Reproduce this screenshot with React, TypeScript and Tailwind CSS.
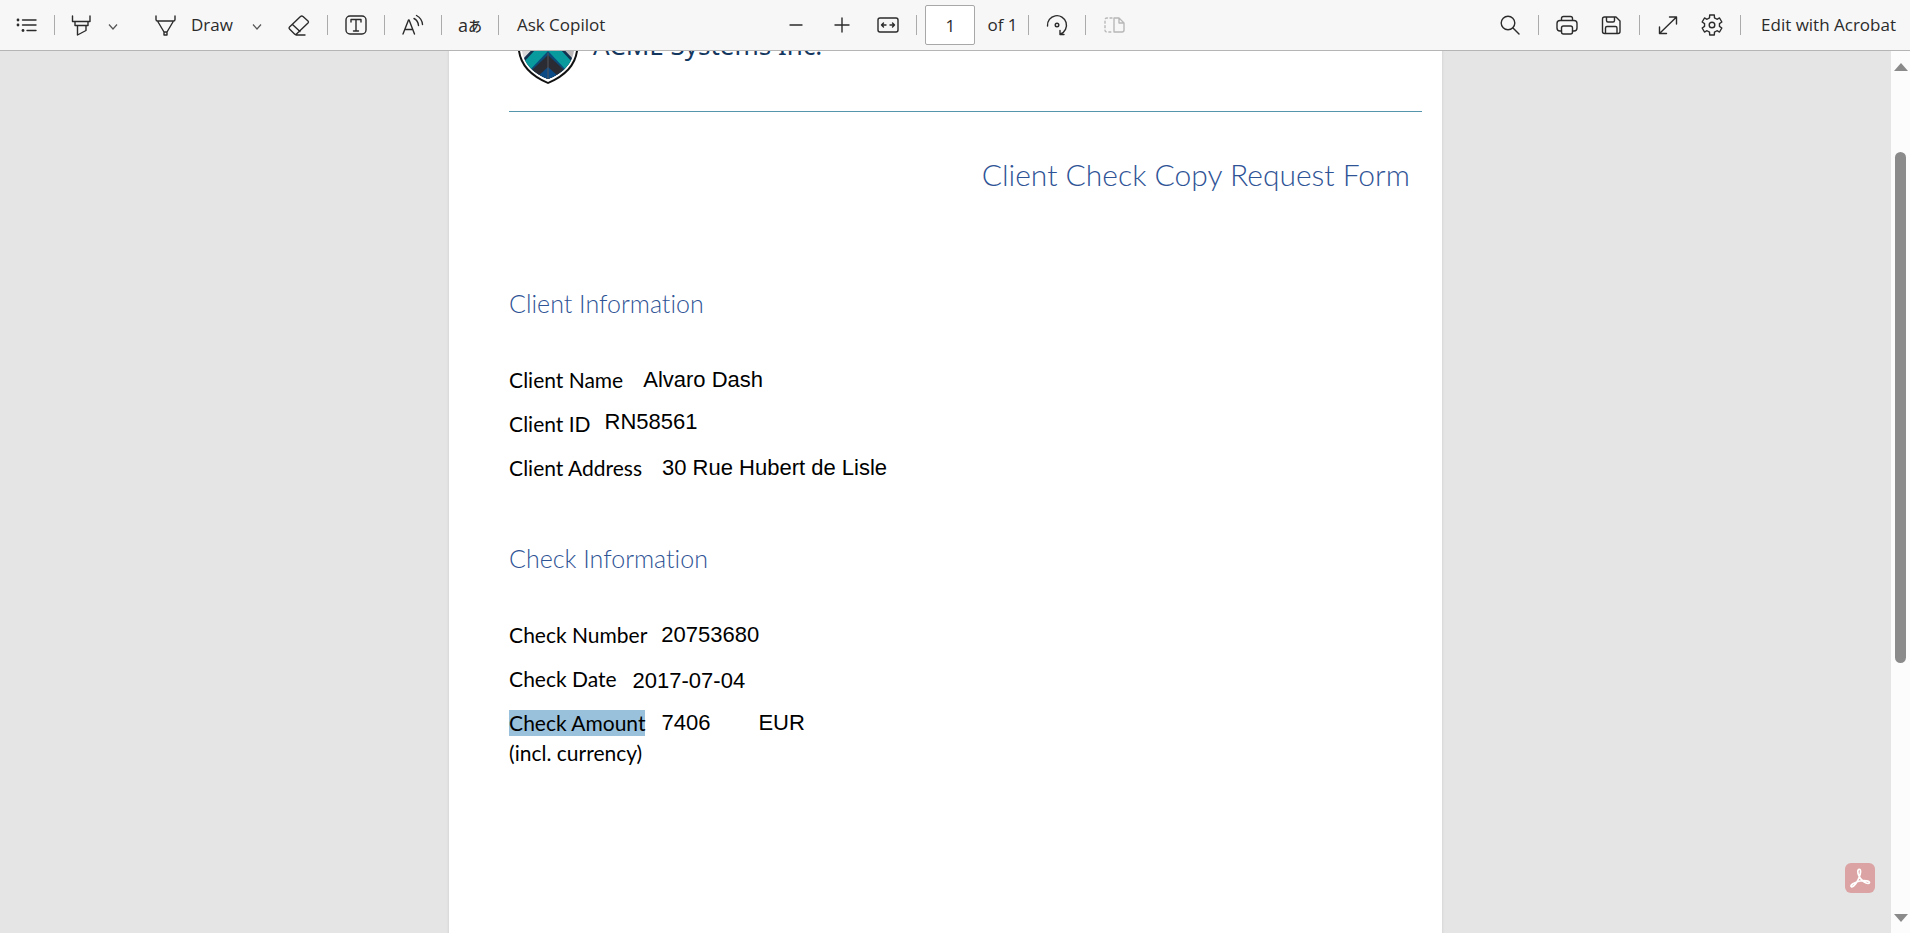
import React from "react";

const toolbarFont = "font-['Open_Sans','Noto_Sans',sans-serif]";
const bodyFont = "font-['Lato',sans-serif] [font-variant-ligatures:none]";
const valueFont = "font-['Liberation_Sans',Arial,sans-serif]";

// Outline of a six-toothed gear centred in a 24x24 box.
const gearPath =
  [0, 60, 120, 180, 240, 300]
    .flatMap((centre) =>
      [
        [-19, 7.6],
        [-13, 10.3],
        [13, 10.3],
        [19, 7.6],
      ].map(([offset, radius]) => {
        const angle = ((centre - 90 + offset) * Math.PI) / 180;
        return `${(12 + radius * Math.cos(angle)).toFixed(2)} ${(12 + radius * Math.sin(angle)).toFixed(2)}`;
      }),
    )
    .reduce((path, point, i) => path + (i ? "L" : "M") + point, "") + "Z";

function Glyph({ children, width = 1.4 }: { children: React.ReactNode; width?: number }) {
  return (
    <svg
      aria-hidden="true"
      viewBox="0 0 24 24"
      className="size-6 shrink-0"
      fill="none"
      stroke="currentColor"
      strokeWidth={width}
      strokeLinecap="round"
      strokeLinejoin="round"
    >
      {children}
    </svg>
  );
}

function Tool({ label, children, disabled }: { label: string; children: React.ReactNode; disabled?: boolean }) {
  return (
    <button
      type="button"
      aria-label={label}
      disabled={disabled}
      className="flex h-9 w-9 shrink-0 items-center justify-center disabled:text-[#b8b8b8]"
    >
      {children}
    </button>
  );
}

function Chevron({ label }: { label: string }) {
  return (
    <button type="button" aria-label={label} className="flex h-9 w-4 shrink-0 items-center justify-center">
      <svg aria-hidden="true" viewBox="0 0 10 10" className="mt-1 size-2.5" fill="none" stroke="#555" strokeWidth="1.2">
        <path d="M1 2.5 5 7l4-4.5" />
      </svg>
    </button>
  );
}

function Divider() {
  return <span className="mx-2.5 h-5 w-px shrink-0 bg-[#ababab]" />;
}

function Toolbar() {
  return (
    <header
      className={`grid h-[51px] shrink-0 grid-cols-[1fr_auto_1fr] items-center border-b border-[#b5b5b5] bg-[#f7f7f7] text-[17px] whitespace-nowrap text-[#2b2b2b] ${toolbarFont}`}
    >
      <div className="flex items-center pl-2">
        <Tool label="Table of contents">
          <Glyph>
            <path d="M8.500 7H22M8.500 12H22M13 17.500h9" />
            <g fill="currentColor" stroke="none">
              <circle cx="4" cy="7" r="1.400" />
              <circle cx="4" cy="12" r="1.400" />
              <circle cx="9" cy="17.500" r="1.400" />
            </g>
          </Glyph>
        </Tool>
        <Divider />
        <div className="flex items-center gap-2 pr-4">
          <button type="button" aria-label="Highlight" className="flex h-9 w-8 items-center justify-center">
            <Glyph>
              <path d="M3.500 3v5.500h17.500V3M6 8.500v4h13v-4M8.500 12.500V22l8.500-4.500v-5" />
            </Glyph>
          </button>
          <Chevron label="Highlight options" />
        </div>
        <div className="flex items-center gap-4 pr-4 pl-2.5">
          <button type="button" className="flex h-9 items-center gap-3.5 pl-1.5">
            <Glyph>
              <path d="M3 3v3.500Q3 8 4.500 8h16Q22 8 22 6.500V3M4.500 8 11 19h3l6.500-11M11 19v3h3v-3" />
            </Glyph>
            Draw
          </button>
          <Chevron label="Draw options" />
        </div>
        <Tool label="Erase">
          <Glyph>
            <path d="m13.500 3.500-11 10.500q-1 1 0 2l5 5q1 1 2 0L21 10q1-1 0-2l-5-4.500q-1.300-1-2.500 0ZM5.500 11.500l7.500 7M9 22h9" />
          </Glyph>
        </Tool>
        <Divider />
        <Tool label="Add text">
          <Glyph>
            <rect x="2" y="3" width="20" height="18" rx="4" />
            <path d="M7 9V6.500h10V9M12 6.500V18M9.500 18h5" />
          </Glyph>
        </Tool>
        <Divider />
        <Tool label="Read aloud">
          <Glyph>
            <path d="M2 21 7.500 7h.600L13.500 21M4 16.500h7.800M13 5.500q4 2 4.500 7M15.500 2.500q5.500 3 6 9" />
          </Glyph>
        </Tool>
        <Divider />
        <Tool label="Translate">
          <span className="text-lg leading-6">a</span>
          <span className="font-['Noto_Sans_CJK_JP',sans-serif] text-sm leading-6 font-medium" lang="ja">
            あ
          </span>
        </Tool>
        <Divider />
        <button type="button" className="h-9 px-2">
          Ask Copilot
        </button>
      </div>

      <div className="flex items-center">
        <div className="flex items-center gap-2.5">
          <Tool label="Zoom out">
            <Glyph>
              <path d="M6 12h12" />
            </Glyph>
          </Tool>
          <Tool label="Zoom in">
            <Glyph>
              <path d="M5 12h14M12 5v14" />
            </Glyph>
          </Tool>
          <Tool label="Fit to width">
            <Glyph>
              <rect x="2" y="5" width="20" height="14" rx="2" />
              <path d="M10 12H5.500m2-2-2 2 2 2M14 12h4.500m-2-2 2 2-2 2" />
            </Glyph>
          </Tool>
        </div>
        <span className="mr-2 ml-2.5 h-5 w-px bg-[#ababab]" />
        <label className="flex items-center gap-3">
          <input
            aria-label="Page number"
            defaultValue="1"
            className="h-10 w-[50px] rounded-xs border border-[#a8a8a8] bg-white text-center outline-none"
          />
          of 1
        </label>
        <span className="mr-2.5 ml-2.5 h-5 w-px bg-[#ababab]" />
        <Tool label="Rotate">
          <Glyph>
            <path d="M2.500 13A9.500 9.500 0 1 1 15.500 21M15 17.500V21.500h4" />
            <circle cx="12" cy="12" r="1.800" />
          </Glyph>
        </Tool>
        <Divider />
        <Tool label="Page view" disabled>
          <Glyph>
            <path d="M12 5v14h8q2 0 2-2v-7l-5-5ZM17 5v5h5" />
            <path d="M10 5H5Q3 5 3 7v10q0 2 2 2h5" strokeDasharray="2 2.500" />
          </Glyph>
        </Tool>
      </div>

      <div className="flex items-center justify-end pr-3.5">
        <Tool label="Find">
          <Glyph>
            <circle cx="10" cy="10" r="6.800" />
            <path d="m15 15 6 6" />
          </Glyph>
        </Tool>
        <Divider />
        <div className="flex items-center gap-2">
          <Tool label="Print">
            <Glyph>
              <path d="M6.500 7.500V5.500q0-2 2-2h7q2 0 2 2v2M6.500 18H5q-3 0-3-3v-4.500q0-3 3-3h14q3 0 3 3V15q0 3-3 3h-1.500" />
              <rect x="6.500" y="13" width="11" height="8" rx="2" />
            </Glyph>
          </Tool>
          <Tool label="Save">
            <Glyph>
              <path d="M5.500 4H17l4 4v10.500q0 2-2 2H5.500q-2 0-2-2V6q0-2 2-2ZM7.500 4v3.500q0 1.500 1.500 1.500h5q1.500 0 1.500-1.500V4M6.500 20.500V15q0-1.500 1.500-1.500h8.500q1.500 0 1.500 1.500v5.500" />
            </Glyph>
          </Tool>
        </div>
        <Divider />
        <div className="flex items-center gap-2">
          <Tool label="Full screen">
            <Glyph>
              <path d="M3.500 20.500 20.500 4M13.500 4h7v7M3.500 14v6.500h7" />
            </Glyph>
          </Tool>
          <Tool label="Settings">
            <Glyph>
              <path d={gearPath} />
              <circle cx="12" cy="12" r="2.800" />
            </Glyph>
          </Tool>
        </div>
        <Divider />
        <button type="button" className="h-9 pl-2.5">
          Edit with Acrobat
        </button>
      </div>
    </header>
  );
}

function Shield() {
  return (
    <svg aria-label="ACME Systems shield" role="img" viewBox="0 0 62 72" className="h-[72px] w-[62px]">
      <defs>
        <clipPath id="shield">
          <path d="M31 2 57 12V38Q54 57 31 66 8 57 5 38V12Z" />
        </clipPath>
      </defs>
      <path d="M31 0 61 10V38Q58 60 31 71 4 60 1 38V10Z" fill="#111" />
      <path d="M31 2 59 12V38Q56 58 31 69 6 58 3 38V12Z" fill="#fff" />
      <g clipPath="url(#shield)">
        <path d="M0 0h31v72H0Z" fill="#dedbdc" />
        <path d="M31 0h31v72H31Z" fill="#bdb9bb" />
        <path d="M31 20 60 50V72H2V50Z" fill="#12324f" />
        <path d="M31 23 56 50 45 60 31 42 17 60 6 50Z" fill="#089a9c" />
        <path d="M31 38 50 58V72H12V58Z" fill="#0c4a78" />
        <path d="M31 42 47 57V72H15V57Z" fill="#2b2c33" />
        <path d="M31 54 42 64V72H20V64Z" fill="#0b4a84" />
        <path d="M31 40V68" stroke="#55565c" strokeWidth="1" />
      </g>
    </svg>
  );
}

function Row({
  label,
  children,
  selected,
  note,
}: {
  label: string;
  children: React.ReactNode;
  selected?: boolean;
  note?: string;
}) {
  return (
    <div className="mb-4">
      <div className="flex items-center leading-7">
        <dt className={selected ? "bg-[#9ac1dc] leading-[26px]" : ""}>{label}</dt>
        {children}
      </div>
      {note && <div className="mt-0.5 leading-7">{note}</div>}
    </div>
  );
}

const value = `text-[22px] leading-7 ${valueFont}`;
const raisedValue = `pb-1 text-[22px] leading-6 ${valueFont}`;
const loweredValue = `pt-1 text-[22px] leading-6 ${valueFont}`;

function SectionTitle({ children }: { children: React.ReactNode }) {
  return <h2 className="mb-[47px] text-[25px] leading-8 font-light text-[#2f5496]">{children}</h2>;
}

function Document() {
  return (
    <article
      className={`-mt-[38px] min-h-[1180px] w-[52.5%] shrink-0 bg-white pr-5 pl-[60px] text-[21px] text-black shadow-sm ${bodyFont}`}
    >
      <div className="flex h-[99px] items-start gap-3.5 border-b border-[#5596ac] pl-2">
        <Shield />
        <p className="pt-4 font-['Noto_Sans',sans-serif] text-[26px] leading-8 text-[#14375f]">ACME Systems Inc.</p>
      </div>
      <h1 className="pt-[42px] pr-3 text-right text-[30px] leading-10 font-light text-[#2f5496]">
        Client Check Copy Request Form
      </h1>
      <section className="mt-[93px]">
        <SectionTitle>Client Information</SectionTitle>
        <dl>
          <Row label="Client Name">
            <dd className={`ml-5 ${value}`}>Alvaro Dash</dd>
          </Row>
          <Row label="Client ID">
            <dd className={`ml-3.5 ${raisedValue}`}>RN58561</dd>
          </Row>
          <Row label="Client Address">
            <dd className={`ml-5 ${value}`}>30 Rue Hubert de Lisle</dd>
          </Row>
        </dl>
      </section>
      <section className="mt-[60px]">
        <SectionTitle>Check Information</SectionTitle>
        <dl>
          <Row label="Check Number">
            <dd className={`ml-3.5 ${value}`}>20753680</dd>
          </Row>
          <Row label="Check Date">
            <dd className={`ml-4 ${loweredValue}`}>2017-07-04</dd>
          </Row>
          <Row label="Check Amount" note="(incl. currency)" selected>
            <dd className={`ml-4 ${value}`}>7406</dd>
            <dd className={`ml-12 ${value}`}>EUR</dd>
          </Row>
        </dl>
      </section>
    </article>
  );
}

function Scrollbar() {
  return (
    <div aria-hidden="true" className="flex w-[19px] shrink-0 flex-col items-center bg-[#fcfcfc] pt-3 pb-[11px]">
      <svg viewBox="0 0 14 8" className="h-2 w-3.5" fill="#8a8a8a">
        <path d="M7 0 14 8H0Z" />
      </svg>
      <div className="flex w-full flex-1 flex-col items-center pt-[81px]">
        <div className="h-[67%] w-[11px] rounded-full bg-[#8b8b8b]" />
      </div>
      <svg viewBox="0 0 14 8" className="h-2 w-3.5" fill="#8a8a8a">
        <path d="M0 0h14L7 8Z" />
      </svg>
    </div>
  );
}

export default function App() {
  return (
    <div className="flex h-screen flex-col overflow-hidden">
      <Toolbar />
      <div className="flex min-h-0 flex-1">
        <main className="relative flex min-w-0 flex-1 items-start justify-center overflow-hidden bg-[#e5e5e5]">
          <Document />
          <button
            type="button"
            aria-label="Open in Acrobat"
            className="absolute right-4 bottom-10 flex size-[30px] items-center justify-center rounded-md bg-[#dba3a3]"
          >
            <svg aria-hidden="true" viewBox="0 0 24 24" className="size-6" fill="none" stroke="#fff" strokeWidth="1.700">
              <path d="M10.500 3.500c3-1.500 2.200 4 .8 7.500-1.500 4-5 10-7.800 9.800-2.500-1.500 3.500-4.800 8.500-5.800 4-.800 10-.300 9.500 1.700-1 2.300-6.500-.700-9-4.200-2.200-3-3.700-7.500-2-9Z" />
            </svg>
          </button>
        </main>
        <Scrollbar />
      </div>
    </div>
  );
}
